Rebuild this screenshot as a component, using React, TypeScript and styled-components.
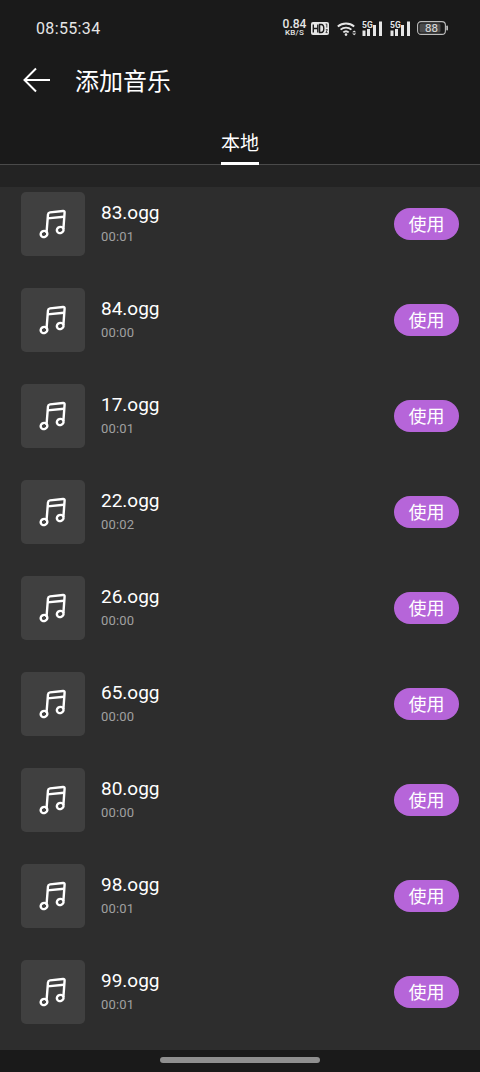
import React from "react";
import styled, { createGlobalStyle } from "styled-components";

const Global = createGlobalStyle`
  html, body { margin: 0; padding: 0; background: #1a1a1a; }
  body { font-family: Roboto, "Noto Sans CJK SC", sans-serif; }
`;

const Page = styled.div`
  width: 480px;
  height: 1072px;
  display: flex;
  flex-direction: column;
  background: #1a1a1a;
  overflow: hidden;
`;

const StatusBar = styled.div`
  height: 56px;
  padding: 0 32px 0 36px;
  display: flex;
  align-items: center;
  justify-content: space-between;
  color: #e6e6e6;
`;

const Clock = styled.span`
  margin-top: 1px;
  font: 400 16px/20px Roboto, sans-serif;
  letter-spacing: 0.35px;
`;

const StatusIcons = styled.div`
  display: flex;
  align-items: center;
`;

const Slot = styled.div<{ $gap?: number }>`
  margin-left: ${(p) => p.$gap ?? 0}px;
  display: flex;
`;

const Speed = styled.div`
  width: 23px;
  display: flex;
  flex-direction: column;
  align-items: center;
  font: 500 12px/10px Roboto, sans-serif;
  span { font-size: 8px; line-height: 8px; letter-spacing: 0.2px; }
`;

const ToolBar = styled.div`
  height: 50px;
  padding: 0 0 2px 23px;
  box-sizing: border-box;
  display: flex;
  align-items: center;
  gap: 24px;
`;

const Title = styled.h1`
  margin: 0;
  font: 400 24px/32px "Noto Sans CJK SC", sans-serif;
  color: #fff;
`;

const Tabs = styled.div`
  height: 59px;
  box-sizing: border-box;
  display: flex;
  justify-content: center;
  align-items: flex-end;
  border-bottom: 1px solid #4a4a4a;
`;

const Tab = styled.div`
  width: 38px;
  height: 36px;
  box-sizing: border-box;
  border-bottom: 3px solid #fff;
  margin-bottom: -1px;
  font: 400 19px/26px "Noto Sans CJK SC", sans-serif;
  color: #fff;
  white-space: nowrap;
  display: flex;
  justify-content: center;
`;

const Spacer = styled.div`
  height: 22px;
  background: #232323;
`;

const List = styled.div`
  flex: 1;
  background: #2d2d2d;
  padding: 5px 21px 0;
  display: flex;
  flex-direction: column;
  gap: 32px;
  overflow: hidden;
`;

const Row = styled.div`
  height: 64px;
  flex: none;
  display: flex;
  align-items: center;
`;

const Thumb = styled.div`
  width: 64px;
  height: 64px;
  border-radius: 5px;
  background: #404040;
  display: flex;
  align-items: center;
  justify-content: center;
`;

const Info = styled.div`
  flex: 1;
  margin: 0 0 1px 16px;
  display: flex;
  flex-direction: column;
  gap: 3px;
`;

const Name = styled.div`
  font: 400 19px/24px Roboto, sans-serif;
  color: #fff;
`;

const Duration = styled.div`
  font: 400 13px/18px Roboto, sans-serif;
  color: #a0a0a0;
  letter-spacing: 0.2px;
`;

const UseButton = styled.button`
  width: 65px;
  height: 32px;
  border: 0;
  padding: 0 0 2px;
  border-radius: 16px;
  background: #b665d9;
  color: #fff;
  font: 400 18px/30px "Noto Sans CJK SC", sans-serif;
`;

const Footer = styled.div`
  height: 22px;
  flex: none;
  display: flex;
  justify-content: center;
  padding-top: 7px;
  box-sizing: border-box;
`;

const HomeBar = styled.div`
  width: 160px;
  height: 6px;
  border-radius: 3px;
  background: #8f8f8f;
`;

const Back = () => (
  <svg width="28" height="28" viewBox="0 0 28 28" fill="none" stroke="#fff" strokeWidth="2">
    <path d="M27 14H2M13 2.5 1.5 14 13 25.5" />
  </svg>
);

const Note = () => (
  <svg width="28" height="32" viewBox="0 0 28 32" fill="none" stroke="#fff" strokeWidth="2.4" strokeLinejoin="round">
    <path d="M7.5 25 9 6.4q.2-1.8 2-2L24 3q1.8-.2 1.6 1.6L24.4 21" />
    <path d="M8.4 10.4 25 8.7" />
    <ellipse cx="5" cy="26" rx="3.4" ry="3" transform="rotate(-20 5 26)" />
    <ellipse cx="21.2" cy="22" rx="3.4" ry="3" transform="rotate(-20 21.2 22)" />
  </svg>
);

const HdIcon = () => (
  <svg width="18" height="13" viewBox="0 0 18 13">
    <rect width="18" height="13" rx="2" fill="#e6e6e6" />
    <path d="M2.3 2.5v8M6.8 2.5v8M2.3 6.5h4.5M8.6 2.5v8h1.6q2.6 0 2.6-4t-2.6-4z" fill="none" stroke="#1a1a1a" strokeWidth="1.4" />
    <path d="M14.6 2h1.2v3.6M14.8 7.6h1.6l-1.5 3h1.7" fill="none" stroke="#1a1a1a" strokeWidth=".8" />
  </svg>
);

const WifiIcon = () => (
  <svg width="20" height="15" viewBox="0 0 20 15" fill="none" stroke="#e6e6e6" strokeWidth="1.9">
    <path d="M.8 5.5a12.5 12.5 0 0 1 16.4 0M3.6 8.6a8.3 8.3 0 0 1 10.8 0M6.3 11.4a4 4 0 0 1 5.4 0" />
    <circle cx="9" cy="13.6" r="1.3" fill="#e6e6e6" stroke="none" />
    <path d="M15.2 11.2h4l-2-1.6zM15.2 12.6h4l-2 1.6z" fill="#e6e6e6" stroke="none" />
  </svg>
);

const SignalIcon = () => (
  <svg width="21" height="15" viewBox="0 0 21 15" fill="#e6e6e6">
    <text x="0" y="6.5" fontSize="8.5" fontWeight="700" fontFamily="Roboto, sans-serif">5G</text>
    <rect x="0.5" y="9.5" width="3" height="5.5" />
    <rect x="5" y="8" width="3" height="7" />
    <rect x="11" y="4" width="3" height="11" />
    <rect x="17" y="0.5" width="3" height="14.5" />
  </svg>
);

const BatteryIcon = () => (
  <svg width="31" height="14" viewBox="0 0 31 14">
    <rect x=".6" y=".6" width="27.8" height="12.8" rx="3.5" fill="none" stroke="#bdbdbd" strokeWidth="1.1" />
    <rect x="2.5" y="2.5" width="21" height="9" rx="1.5" fill="#4a4a4a" />
    <rect x="29.3" y="4.5" width="1.7" height="5" rx=".8" fill="#bdbdbd" />
    <text x="14.5" y="11" textAnchor="middle" fontSize="11.5" fontFamily="Roboto, sans-serif" fill="#e0e0e0">88</text>
  </svg>
);

const tracks = [
  ["83.ogg", "00:01"],
  ["84.ogg", "00:00"],
  ["17.ogg", "00:01"],
  ["22.ogg", "00:02"],
  ["26.ogg", "00:00"],
  ["65.ogg", "00:00"],
  ["80.ogg", "00:00"],
  ["98.ogg", "00:01"],
  ["99.ogg", "00:01"],
];

export default function App() {
  return (
    <Page>
      <Global />
      <StatusBar>
        <Clock>08:55:34</Clock>
        <StatusIcons>
          <Speed>0.84<span>KB/S</span></Speed>
          <Slot $gap={5}><HdIcon /></Slot>
          <Slot $gap={8}><WifiIcon /></Slot>
          <Slot $gap={5}><SignalIcon /></Slot>
          <Slot $gap={7}><SignalIcon /></Slot>
          <Slot $gap={6}><BatteryIcon /></Slot>
        </StatusIcons>
      </StatusBar>
      <ToolBar>
        <Back />
        <Title>添加音乐</Title>
      </ToolBar>
      <Tabs>
        <Tab>本地</Tab>
      </Tabs>
      <Spacer />
      <List>
        {tracks.map(([name, time]) => (
          <Row key={name}>
            <Thumb><Note /></Thumb>
            <Info>
              <Name>{name}</Name>
              <Duration>{time}</Duration>
            </Info>
            <UseButton>使用</UseButton>
          </Row>
        ))}
      </List>
      <Footer><HomeBar /></Footer>
    </Page>
  );
}
